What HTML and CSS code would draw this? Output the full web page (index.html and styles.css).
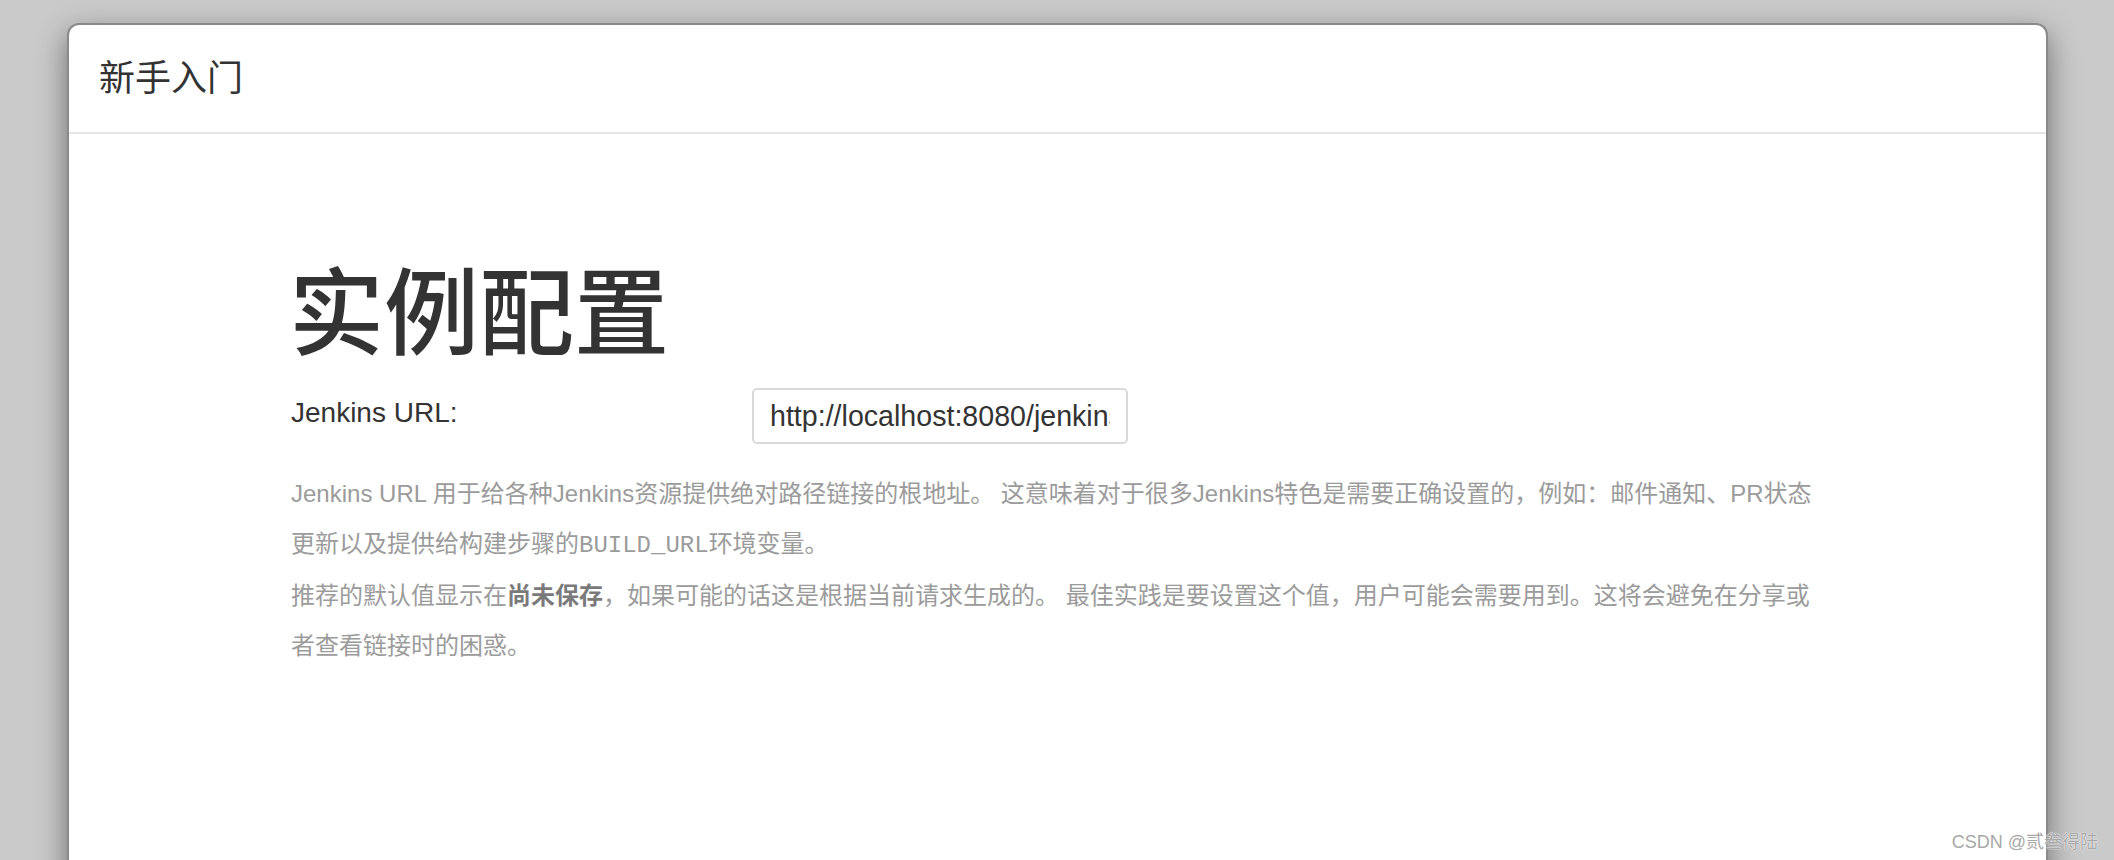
FILE: index.html
```html
<!DOCTYPE html>
<html lang="zh-CN">
<head>
<meta charset="utf-8">
<title>新手入门</title>
<link rel="stylesheet" href="styles.css">
</head>
<body>
<div class="dialog">
  <div class="dialog-header">
    <h4 class="dialog-title">新手入门</h4>
  </div>
  <div class="dialog-body">
    <h1 class="page-title">实例配置</h1>
    <div class="form-row">
      <label class="form-label" for="root-url">Jenkins URL:</label>
      <div class="input-box">
        <input id="root-url" class="form-input" type="text" value="http://localhost:8080/jenkins/">
      </div>
    </div>
    <div class="help-text">
      <p>Jenkins URL 用于给各种Jenkins资源提供绝对路径链接的根地址。 这意味着对于很多Jenkins特色是需要正确设置的，例如：邮件通知、PR状态更新以及提供给构建步骤的<code>BUILD_URL</code>环境变量。</p>
      <p>推荐的默认值显示在<strong>尚未保存</strong>，如果可能的话这是根据当前请求生成的。 最佳实践是要设置这个值，用户可能会需要用到。这将会避免在分享或者查看链接时的困惑。</p>
    </div>
  </div>
</div>
<div class="watermark">CSDN @贰叁得陆</div>
</body>
</html>
```

FILE: styles.css
```css
html, body {
  margin: 0;
  padding: 0;
  height: 100%;
}

body {
  background: #cacaca;
  overflow: hidden;
  font-family: "Liberation Sans", "Noto Sans CJK SC", sans-serif;
  color: #333;
  position: relative;
}

.dialog {
  margin: 23px 66px 0 67px;
  min-height: 900px;
  background: #fff;
  border: 2px solid #8a8a8a;
  border-bottom: none;
  border-radius: 12px 12px 0 0;
  box-shadow: 0 10px 30px rgba(0, 0, 0, 0.45);
}

.dialog-header {
  padding: 29px 30px 28px;
  border-bottom: 2px solid #e5e5e5;
}

.dialog-title {
  margin: 0;
  font-size: 36px;
  line-height: 50px;
  font-weight: 400;
  color: #333;
}

.dialog-body {
  padding: 112px 222px 0 222px;
}

.page-title {
  margin: 0 0 0 -2px;
  font-size: 95px;
  line-height: 138px;
  font-weight: 500;
  color: #333;
}

.form-row {
  display: grid;
  grid-template-columns: 461px 376px;
  align-items: start;
  margin-top: 4px;
}

.form-label {
  font-size: 28px;
  line-height: 40px;
  color: #333;
  padding-top: 5px;
}

.form-input {
  box-sizing: border-box;
  width: 376px;
  height: 56px;
  padding: 0 16px;
  border: 2px solid #d9d9d9;
  border-radius: 5px;
  font-family: "Liberation Sans", "Noto Sans CJK SC", sans-serif;
  font-size: 28.6px;
  color: #333;
  background: #fff;
  outline: none;
}

.help-text {
  margin-top: 25px;
  font-size: 24px;
  line-height: 50px;
  color: #9b9b9b;
}

.help-text p {
  margin: 0;
}

.help-text code {
  font-family: "Liberation Mono", monospace;
  font-size: 24px;
}

.help-text strong {
  font-weight: 700;
  color: #7a7a7a;
}

.watermark {
  position: absolute;
  right: 16px;
  bottom: 6px;
  font-size: 18px;
  line-height: 24px;
  color: #a8a8a8;
  text-shadow: 0 0 1px #fff, 0 0 1px #fff;
}
```
